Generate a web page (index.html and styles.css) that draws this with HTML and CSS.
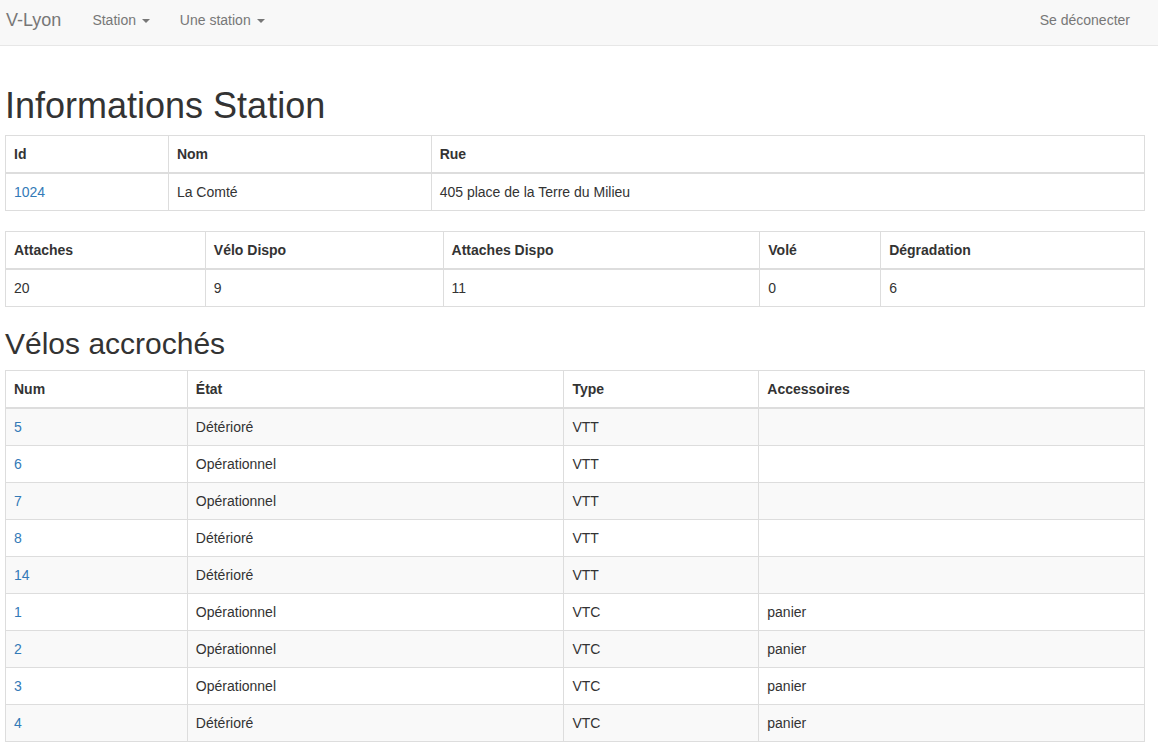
FILE: index.html
```html
<!DOCTYPE html>
<html lang="fr">
<head>
<meta charset="utf-8">
<title>V-Lyon</title>
<link rel="stylesheet" href="styles.css">
</head>
<body>
<nav class="navbar">
  <div class="navbar-inner">
    <a class="brand" href="#">V-Lyon</a>
    <ul class="nav">
      <li><a href="#">Station <span class="caret"></span></a></li>
      <li><a href="#">Une station <span class="caret"></span></a></li>
    </ul>
    <ul class="nav nav-right">
      <li><a href="#">Se déconecter</a></li>
    </ul>
  </div>
</nav>
<main class="content">
  <h1>Informations Station</h1>
  <table class="tbl">
    <thead>
      <tr><th class="w163">Id</th><th class="w263">Nom</th><th class="w714">Rue</th></tr>
    </thead>
    <tbody>
      <tr><td><a href="#">1024</a></td><td>La Comté</td><td>405 place de la Terre du Milieu</td></tr>
    </tbody>
  </table>
  <table class="tbl">
    <thead>
      <tr><th class="w200">Attaches</th><th class="w238">Vélo Dispo</th><th class="w317">Attaches Dispo</th><th class="w121">Volé</th><th class="w264">Dégradation</th></tr>
    </thead>
    <tbody>
      <tr><td>20</td><td>9</td><td>11</td><td>0</td><td>6</td></tr>
    </tbody>
  </table>
  <h2>Vélos accrochés</h2>
  <table class="tbl striped">
    <thead>
      <tr><th class="w182">Num</th><th class="w377">État</th><th class="w195">Type</th><th class="w386">Accessoires</th></tr>
    </thead>
    <tbody>
      <tr><td><a href="#">5</a></td><td>Détérioré</td><td>VTT</td><td></td></tr>
      <tr><td><a href="#">6</a></td><td>Opérationnel</td><td>VTT</td><td></td></tr>
      <tr><td><a href="#">7</a></td><td>Opérationnel</td><td>VTT</td><td></td></tr>
      <tr><td><a href="#">8</a></td><td>Détérioré</td><td>VTT</td><td></td></tr>
      <tr><td><a href="#">14</a></td><td>Détérioré</td><td>VTT</td><td></td></tr>
      <tr><td><a href="#">1</a></td><td>Opérationnel</td><td>VTC</td><td>panier</td></tr>
      <tr><td><a href="#">2</a></td><td>Opérationnel</td><td>VTC</td><td>panier</td></tr>
      <tr><td><a href="#">3</a></td><td>Opérationnel</td><td>VTC</td><td>panier</td></tr>
      <tr><td><a href="#">4</a></td><td>Détérioré</td><td>VTC</td><td>panier</td></tr>
    </tbody>
  </table>
</main>
</body>
</html>
```
FILE: styles.css
```css
* { box-sizing: border-box; }
html, body { margin: 0; padding: 0; }
body {
  font-family: "Liberation Sans", Arial, Helvetica, sans-serif;
  font-size: 14px;
  line-height: 20px;
  color: #333;
  background: #fff;
}
a { color: #337ab7; text-decoration: none; }

.navbar {
  height: 46px;
  background: #f8f8f8;
  border-bottom: 1px solid #e7e7e7;
}
.navbar-inner {
  width: 1140px;
  margin-left: 5px;
  display: flex;
  align-items: flex-start;
}
.brand {
  display: block;
  font-size: 18px;
  line-height: 20px;
  color: #777;
  padding: 10px 16px 15px 1px;
}
.nav {
  display: flex;
  list-style: none;
  margin: 0;
  padding: 0;
}
.nav a {
  display: block;
  padding: 10px 15px 15px;
  color: #777;
  line-height: 20px;
}
.nav-right { margin-left: auto; }
.caret {
  display: inline-block;
  width: 0;
  height: 0;
  margin-left: 2px;
  vertical-align: middle;
  border-top: 4px dashed #777;
  border-right: 4px solid transparent;
  border-left: 4px solid transparent;
}

.content {
  width: 1140px;
  margin: 20px 0 0 5px;
}
h1, h2 {
  font-family: "Liberation Sans", Arial, Helvetica, sans-serif;
  font-weight: 500;
  color: #333;
  margin: 0 0 10px;
}
h1 { font-size: 36px; line-height: 39px; padding-top: 20px; }
h2 { font-size: 30px; line-height: 33px; }

.tbl {
  width: 1140px;
  border-collapse: collapse;
  border-spacing: 0;
  border: 1px solid #ddd;
  margin-bottom: 20px;
  background: #fff;
}
.tbl th, .tbl td {
  padding: 8px;
  line-height: 20px;
  text-align: left;
  vertical-align: top;
  border: 1px solid #ddd;
}
.tbl thead th {
  font-weight: bold;
  border-bottom: 2px solid #ddd;
  vertical-align: bottom;
}
.striped tbody tr:nth-of-type(odd) { background: #f9f9f9; }

.w121 { width: 121px; }
.w163 { width: 163px; }
.w182 { width: 182px; }
.w195 { width: 195px; }
.w200 { width: 200px; }
.w238 { width: 238px; }
.w263 { width: 263px; }
.w264 { width: 264px; }
.w317 { width: 317px; }
.w377 { width: 377px; }
.w386 { width: 386px; }
.w714 { width: 714px; }
```
